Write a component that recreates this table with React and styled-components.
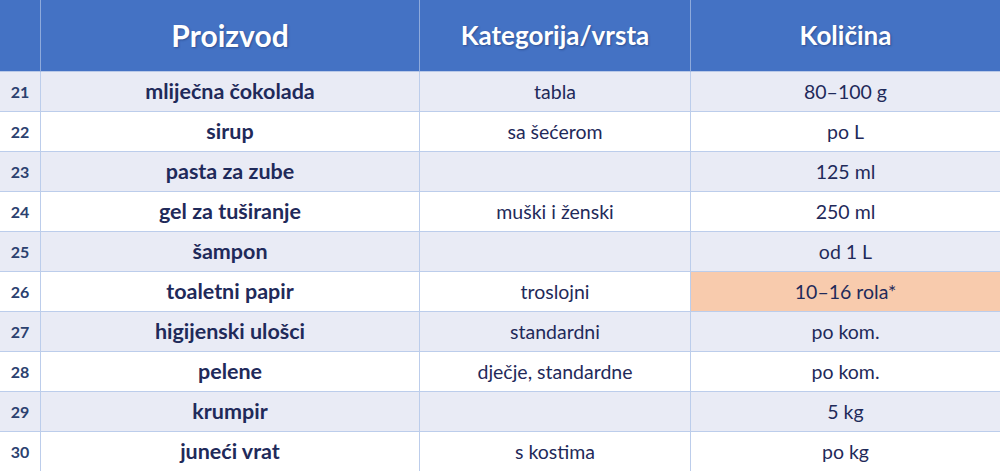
import styled, { createGlobalStyle } from "styled-components";

const GlobalStyle = createGlobalStyle`
  html, body {
    margin: 0;
    padding: 0;
    background: #ffffff;
    overflow: hidden;
  }
  body {
    font-family: Lato, "Open Sans", sans-serif;
  }
`;

const rows = [
  { n: 21, product: "mliječna čokolada", kind: "tabla", qty: "80–100 g" },
  { n: 22, product: "sirup", kind: "sa šećerom", qty: "po L" },
  { n: 23, product: "pasta za zube", kind: "", qty: "125 ml" },
  { n: 24, product: "gel za tuširanje", kind: "muški i ženski", qty: "250 ml" },
  { n: 25, product: "šampon", kind: "", qty: "od 1 L" },
  { n: 26, product: "toaletni papir", kind: "troslojni", qty: "10–16 rola*", highlight: true },
  { n: 27, product: "higijenski ulošci", kind: "standardni", qty: "po kom." },
  { n: 28, product: "pelene", kind: "dječje, standardne", qty: "po kom." },
  { n: 29, product: "krumpir", kind: "", qty: "5 kg" },
  { n: 30, product: "juneći vrat", kind: "s kostima", qty: "po kg" },
];

export default function App() {
  return (
    <>
      <GlobalStyle />
      <Table>
        <HeadCell />
        <HeadCell>Proizvod</HeadCell>
        <HeadCell $small>Kategorija/vrsta</HeadCell>
        <HeadCell $small>Količina</HeadCell>
        {rows.map((r, i) => (
          <Row key={r.n} $band={i % 2 === 0}>
            <NumCell>{r.n}</NumCell>
            <ProductCell>{r.product}</ProductCell>
            <Cell>{r.kind}</Cell>
            <Cell $highlight={r.highlight}>{r.qty}</Cell>
          </Row>
        ))}
      </Table>
    </>
  );
}

const Table = styled.div`
  display: grid;
  grid-template-columns: 41px 379px 271px 1fr;
  grid-template-rows: 72px repeat(10, 40px);
  width: 1000px;
`;

const HeadCell = styled.div`
  display: flex;
  align-items: center;
  justify-content: center;
  background: #4472c4;
  color: #ffffff;
  font-weight: 700;
  font-size: ${(p) => (p.$small ? "26px" : "30px")};
  text-shadow: 1px 1px 2px rgba(20, 40, 90, 0.45);
  border-right: 1px solid #8eaadc;
  border-bottom: 1px solid #b9c9e8;
  padding-bottom: 2px;
  &:nth-child(4) {
    border-right: none;
  }
`;

const Row = styled.div`
  display: contents;
  & > div {
    background: ${(p) => (p.$band ? "#e9ebf5" : "#ffffff")};
  }
`;

const Cell = styled.div`
  display: flex;
  align-items: center;
  justify-content: center;
  color: #1f2a5a;
  font-size: 19.5px;
  border-right: 1px solid #bccdeb;
  border-bottom: 1px solid #bccdeb;
  padding-bottom: 1px;
  ${(p) => p.$highlight && "background: #f8cbad !important;"}
  &:last-child {
    border-right: none;
  }
`;

const ProductCell = styled(Cell)`
  font-weight: 700;
  font-size: 21.5px;
`;

const NumCell = styled(Cell)`
  font-weight: 700;
  font-size: 16px;
  color: #2b416f;
`;
